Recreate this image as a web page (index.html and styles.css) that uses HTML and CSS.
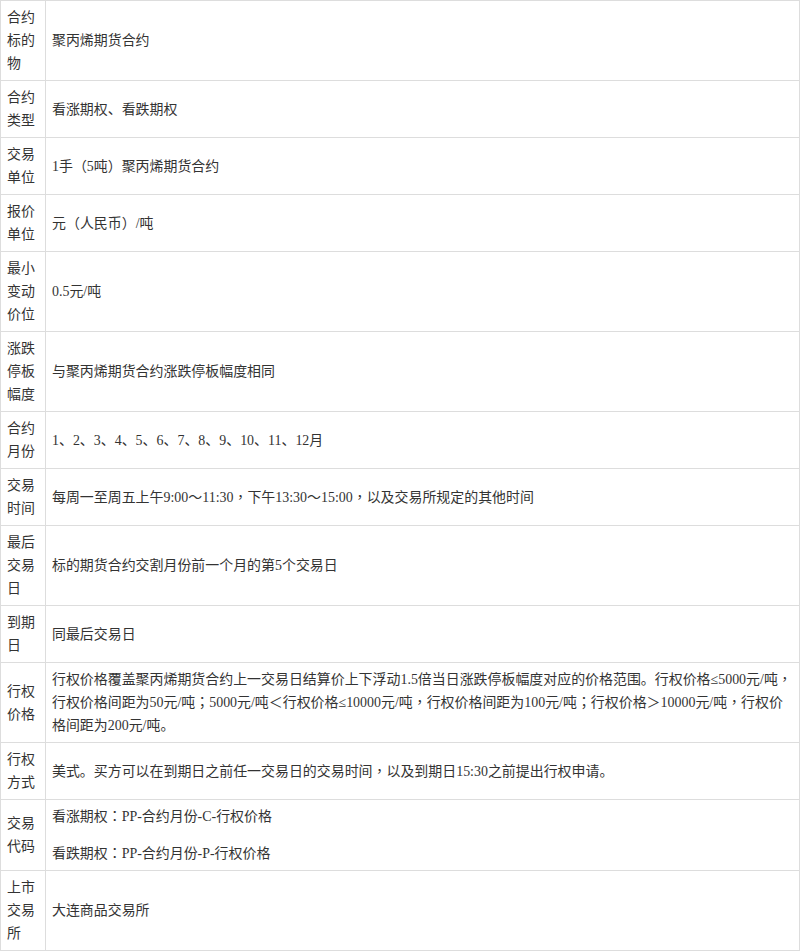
FILE: index.html
```html
<!DOCTYPE html>
<html lang="zh-CN">
<head>
<meta charset="utf-8">
<title>聚丙烯期权合约</title>
<link rel="stylesheet" href="styles.css">
</head>
<body>
<table class="spec">
<colgroup><col class="col-label"><col class="col-value"></colgroup>
<tbody>
<tr><td class="label">合约标的物</td><td class="value">聚丙烯期货合约</td></tr>
<tr><td class="label">合约类型</td><td class="value">看涨期权、看跌期权</td></tr>
<tr><td class="label">交易单位</td><td class="value">1手<span class="fw" lang="zh-TW">（</span>5吨<span class="fw" lang="zh-TW">）</span>聚丙烯期货合约</td></tr>
<tr><td class="label">报价单位</td><td class="value">元<span class="fw" lang="zh-TW">（</span>人民币<span class="fw" lang="zh-TW">）</span>/吨</td></tr>
<tr><td class="label">最小变动价位</td><td class="value">0.5元/吨</td></tr>
<tr><td class="label">涨跌停板幅度</td><td class="value">与聚丙烯期货合约涨跌停板幅度相同</td></tr>
<tr><td class="label">合约月份</td><td class="value">1、2、3、4、5、6、7、8、9、10、11、12月</td></tr>
<tr><td class="label">交易时间</td><td class="value">每周一至周五上午9:00<span class="fw" lang="zh-TW">～</span>11:30<span class="fw" lang="zh-TW">，</span>下午13:30<span class="fw" lang="zh-TW">～</span>15:00<span class="fw" lang="zh-TW">，</span>以及交易所规定的其他时间</td></tr>
<tr><td class="label">最后交易日</td><td class="value">标的期货合约交割月份前一个月的第5个交易日</td></tr>
<tr><td class="label">到期日</td><td class="value">同最后交易日</td></tr>
<tr><td class="label">行权价格</td><td class="value">行权价格覆盖聚丙烯期货合约上一交易日结算价上下浮动1.5倍当日涨跌停板幅度对应的价格范围。行权价格≤5000元/吨<span class="fw" lang="zh-TW">，</span>行权价格间距为50元/吨<span class="fw" lang="zh-TW">；</span>5000元/吨<span class="fw" lang="zh-TW">＜</span>行权价格≤10000元/吨<span class="fw" lang="zh-TW">，</span>行权价格间距为100元/吨<span class="fw" lang="zh-TW">；</span>行权价格<span class="fw" lang="zh-TW">＞</span>10000元/吨<span class="fw" lang="zh-TW">，</span>行权价格间距为200元/吨。</td></tr>
<tr><td class="label">行权方式</td><td class="value">美式。买方可以在到期日之前任一交易日的交易时间<span class="fw" lang="zh-TW">，</span>以及到期日15:30之前提出行权申请。</td></tr>
<tr><td class="label">交易代码</td><td class="value"><p class="code">看涨期权<span class="fw" lang="zh-TW">：</span>PP-合约月份-C-行权价格</p><p class="code">看跌期权<span class="fw" lang="zh-TW">：</span>PP-合约月份-P-行权价格</p></td></tr>
<tr><td class="label">上市交易所</td><td class="value">大连商品交易所</td></tr>
</tbody>
</table>
</body>
</html>
```

FILE: styles.css
```css
html, body {
  margin: 0;
  padding: 0;
  background: #fff;
}
body {
  font-family: "Liberation Serif", "Noto Sans CJK SC", serif;
  font-size: 13.95px;
  line-height: 23px;
  color: #333;
}
.spec {
  border-collapse: collapse;
  table-layout: fixed;
  width: 800px;
}
.col-label { width: 45px; }
.spec td {
  border: 1px solid #ddd;
  padding: 5px 6px;
  vertical-align: middle;
  word-break: break-all;
}
.fw {
  font-family: "Noto Sans CJK TC", "Noto Sans CJK SC", sans-serif;
  line-height: 20px;
  vertical-align: top;
}
.code {
  margin: 0;
}
.code + .code {
  margin-top: 14px;
}
```
